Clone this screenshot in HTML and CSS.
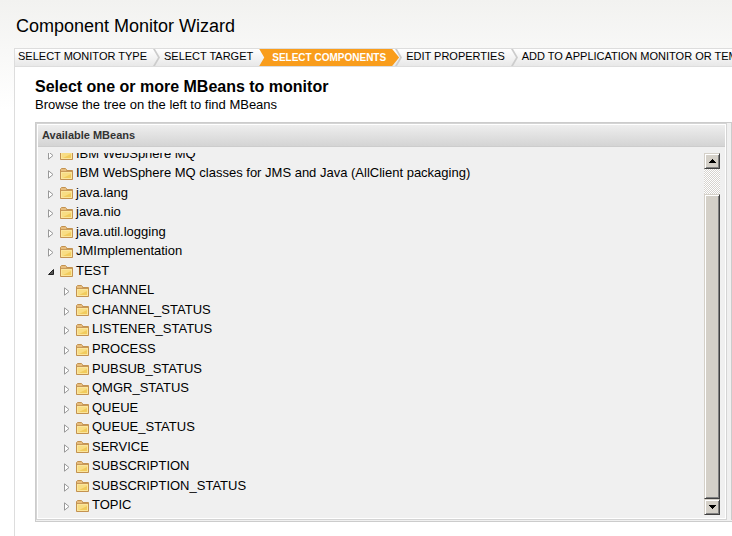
FILE: index.html
```html
<!DOCTYPE html>
<html lang="en">
<head>
<meta charset="UTF-8">
<meta name="viewport" content="width=device-width, initial-scale=1">
<title>Component Monitor Wizard</title>
<link rel="stylesheet" href="styles.css">
</head>
<body>

<svg class="sprites" aria-hidden="true">
  <symbol id="folder" viewBox="0 0 13 12">
    <path d="M.5 11.5V1.5L1.500.5H5.5L6.5 1.5V2.5H12.5V11.5Z" fill="#e6bc7d" stroke="#c39250"/>
    <path d="M1 3h11v1H1z" fill="#c99a58"/>
    <path d="M1 4h11v7H1z" fill="#fbe69c"/>
    <path d="M2 5h9v5H2z" fill="#f8dd84"/>
    <path d="M3 10L11 6V10Z" fill="#f1cb5d"/>
  </symbol>
  <symbol id="closed" viewBox="0 0 6 9">
    <path d="M.5 .8V8.2L5 4.5Z" fill="#fff" stroke="#999"/>
  </symbol>
  <symbol id="open" viewBox="0 0 6 6">
    <path d="M5.500.5V5.5H.5Z" fill="#555" stroke="#222"/>
  </symbol>
  <symbol id="chevron" viewBox="0 0 8 17">
    <path d="M0 0L5 8.500L0 17H2L7 8.500L2 0Z" fill="#ccc"/>
  </symbol>
</svg>

<h1>Component Monitor Wizard</h1>

<div class="wizard">
  <ol class="steps">
    <li>Select monitor type</li>
    <li><svg class="chevron"><use href="#chevron"/></svg>Select target</li>
    <li class="active">Select components</li>
    <li><svg class="chevron"><use href="#chevron"/></svg>Edit properties</li>
    <li><svg class="chevron"><use href="#chevron"/></svg>Add to application monitor or template</li>
  </ol>

  <div class="content">
    <h2>Select one or more MBeans to monitor</h2>
    <p>Browse the tree on the left to find MBeans</p>

    <div class="layout">
      <section class="panel">
        <h3>Available MBeans</h3>
        <div class="scroller">
          <div class="viewport">
            <ul class="tree" id="tree"></ul>
          </div>
          <div class="scrollbar">
            <button class="up" aria-label="Scroll up"><svg viewBox="0 0 7 4"><path d="M3 0h1v1h1v1h1v1h1v1H0V3h1V2h1V1h1z"/></svg></button>
            <div class="thumb"></div>
            <button class="down" aria-label="Scroll down"><svg viewBox="0 0 7 4"><path d="M0 0h7v1H6v1H5v1H4v1H3V3H2V2H1V1H0z"/></svg></button>
          </div>
        </div>
      </section>
      <section class="details"></section>
    </div>
  </div>
</div>

<script>
  const nodes = [
    { name: 'IBM WebSphere MQ' },
    { name: 'IBM WebSphere MQ classes for JMS and Java (AllClient packaging)' },
    { name: 'java.lang' },
    { name: 'java.nio' },
    { name: 'java.util.logging' },
    { name: 'JMImplementation' },
    { name: 'TEST', children: [
      'CHANNEL', 'CHANNEL_STATUS', 'LISTENER_STATUS', 'PROCESS',
      'PUBSUB_STATUS', 'QMGR_STATUS', 'QUEUE', 'QUEUE_STATUS',
      'SERVICE', 'SUBSCRIPTION', 'SUBSCRIPTION_STATUS', 'TOPIC'
    ].map(name => ({ name })) }
  ];

  function render(list) {
    return list.map(node => {
      const arrow = node.children ? 'open' : 'closed';
      const children = node.children ? `<ul>${render(node.children)}</ul>` : '';
      return `<li><div class="node"><svg class="arrow ${arrow}"><use href="#${arrow}"/></svg>` +
        `<svg class="folder"><use href="#folder"/></svg><span>${node.name}</span></div>${children}</li>`;
    }).join('');
  }

  document.getElementById('tree').innerHTML = render(nodes);
</script>

</body>
</html>
```
FILE: styles.css
```css
* {
  box-sizing: border-box;
}
body {
  margin: 0;
  min-height: 100vh;
  display: flex;
  flex-direction: column;
  font-family: "Liberation Sans", Arial, sans-serif;
  font-size: 13px;
  color: #000;
  background: #fff linear-gradient(#f2f2f0, #fff 110px) no-repeat;
}
h1, h2, h3, p, ul, ol {
  margin: 0;
  padding: 0;
}
ul, ol {
  list-style: none;
}
.sprites {
  display: none;
}
h1 {
  padding: 16px 16px 12px;
  font-size: 18px;
  line-height: 20px;
  font-weight: normal;
}
.wizard {
  flex: 1;
  margin-left: 14px;
  border-left: 1px solid #ddd;
  background: #fff;
}

/* step bar */
.steps {
  display: flex;
  height: 19px;
  overflow: hidden;
  border-top: 1px solid #ddd;
  border-bottom: 1px solid #ddd;
  background: linear-gradient(#fff, #e8e8e8);
  font-size: 11px;
  line-height: 15px;
  text-transform: uppercase;
  white-space: nowrap;
}
.steps li {
  display: flex;
  flex: none;
  padding-right: 6px;
}
.steps li:first-child {
  padding-left: 3px;
}
.chevron {
  width: 8px;
  height: 17px;
  margin-right: 3px;
}
.steps .active {
  margin-right: -4px;
  padding: 0 13px;
  color: #fff;
  background: #f99d1c;
  font-size: 10px;
  line-height: 18px;
  font-weight: bold;
  clip-path: polygon(0 0, 95% 0, 100% 50%, 95% 100%, 0 100%, 5px 50%);
}

.content {
  padding: 10px 0 0 20px;
}
h2 {
  font-size: 16px;
  line-height: 20px;
}
p {
  line-height: 16px;
}

/* tree panel */
.layout {
  display: flex;
  margin-top: 9px;
  padding-bottom: 1px;
  border: 1px solid #ccc;
  border-right: 0;
  background: #f0f0f0;
}
.panel {
  flex: 1;
  border: 1px solid #d4d4d4;
  box-shadow: inset 1px 1px #fff, inset -1px -1px #fff;
}
.details {
  width: 1px;
  margin-left: 4px;
  background: #ccc;
}
h3 {
  height: 22px;
  margin: 1px;
  padding-left: 4px;
  border-bottom: 1px solid #ccc;
  background: linear-gradient(#eee, #d4d4d4);
  font-size: 11px;
  line-height: 21px;
  color: #333;
}
.scroller {
  display: flex;
  height: 362px;
  margin: 6px 6px 4px 11px;
}
.viewport {
  flex: 1;
  display: flex;
  align-items: flex-end;
  overflow: hidden;
}
.tree {
  display: grid;
  grid-auto-rows: 1fr;
  flex: none;
  height: 371px;
}
.tree li, .tree ul {
  display: contents;
}
.node {
  display: flex;
  align-items: center;
  padding-bottom: 1px;
  white-space: nowrap;
}
.tree ul .node {
  padding-left: 16px;
}
.arrow {
  width: 6px;
  height: 9px;
  margin: 4px 6px 0 0;
}
.arrow.open {
  height: 6px;
}
.folder {
  width: 13px;
  height: 12px;
  margin: 2px 3px 0 0;
}

/* classic scrollbar */
.scrollbar {
  display: flex;
  flex-direction: column;
  width: 16px;
  background: repeating-conic-gradient(#fff 0 25%, #d6d3ce 0 50%) 0 0 / 2px 2px;
}
.scrollbar button, .thumb {
  border: 1px solid;
  border-color: #d4d0c8 #404040 #404040 #d4d0c8;
  border-radius: 0;
  background: #d4d0c8;
  box-shadow: inset 1px 1px #fff, inset -1px -1px #808080;
}
.scrollbar button {
  display: flex;
  align-items: center;
  justify-content: center;
  height: 16px;
  padding: 0;
}
.scrollbar svg {
  width: 7px;
  height: 4px;
  shape-rendering: crispEdges;
}
.thumb {
  flex: 1;
  margin-top: 25px;
}
```
